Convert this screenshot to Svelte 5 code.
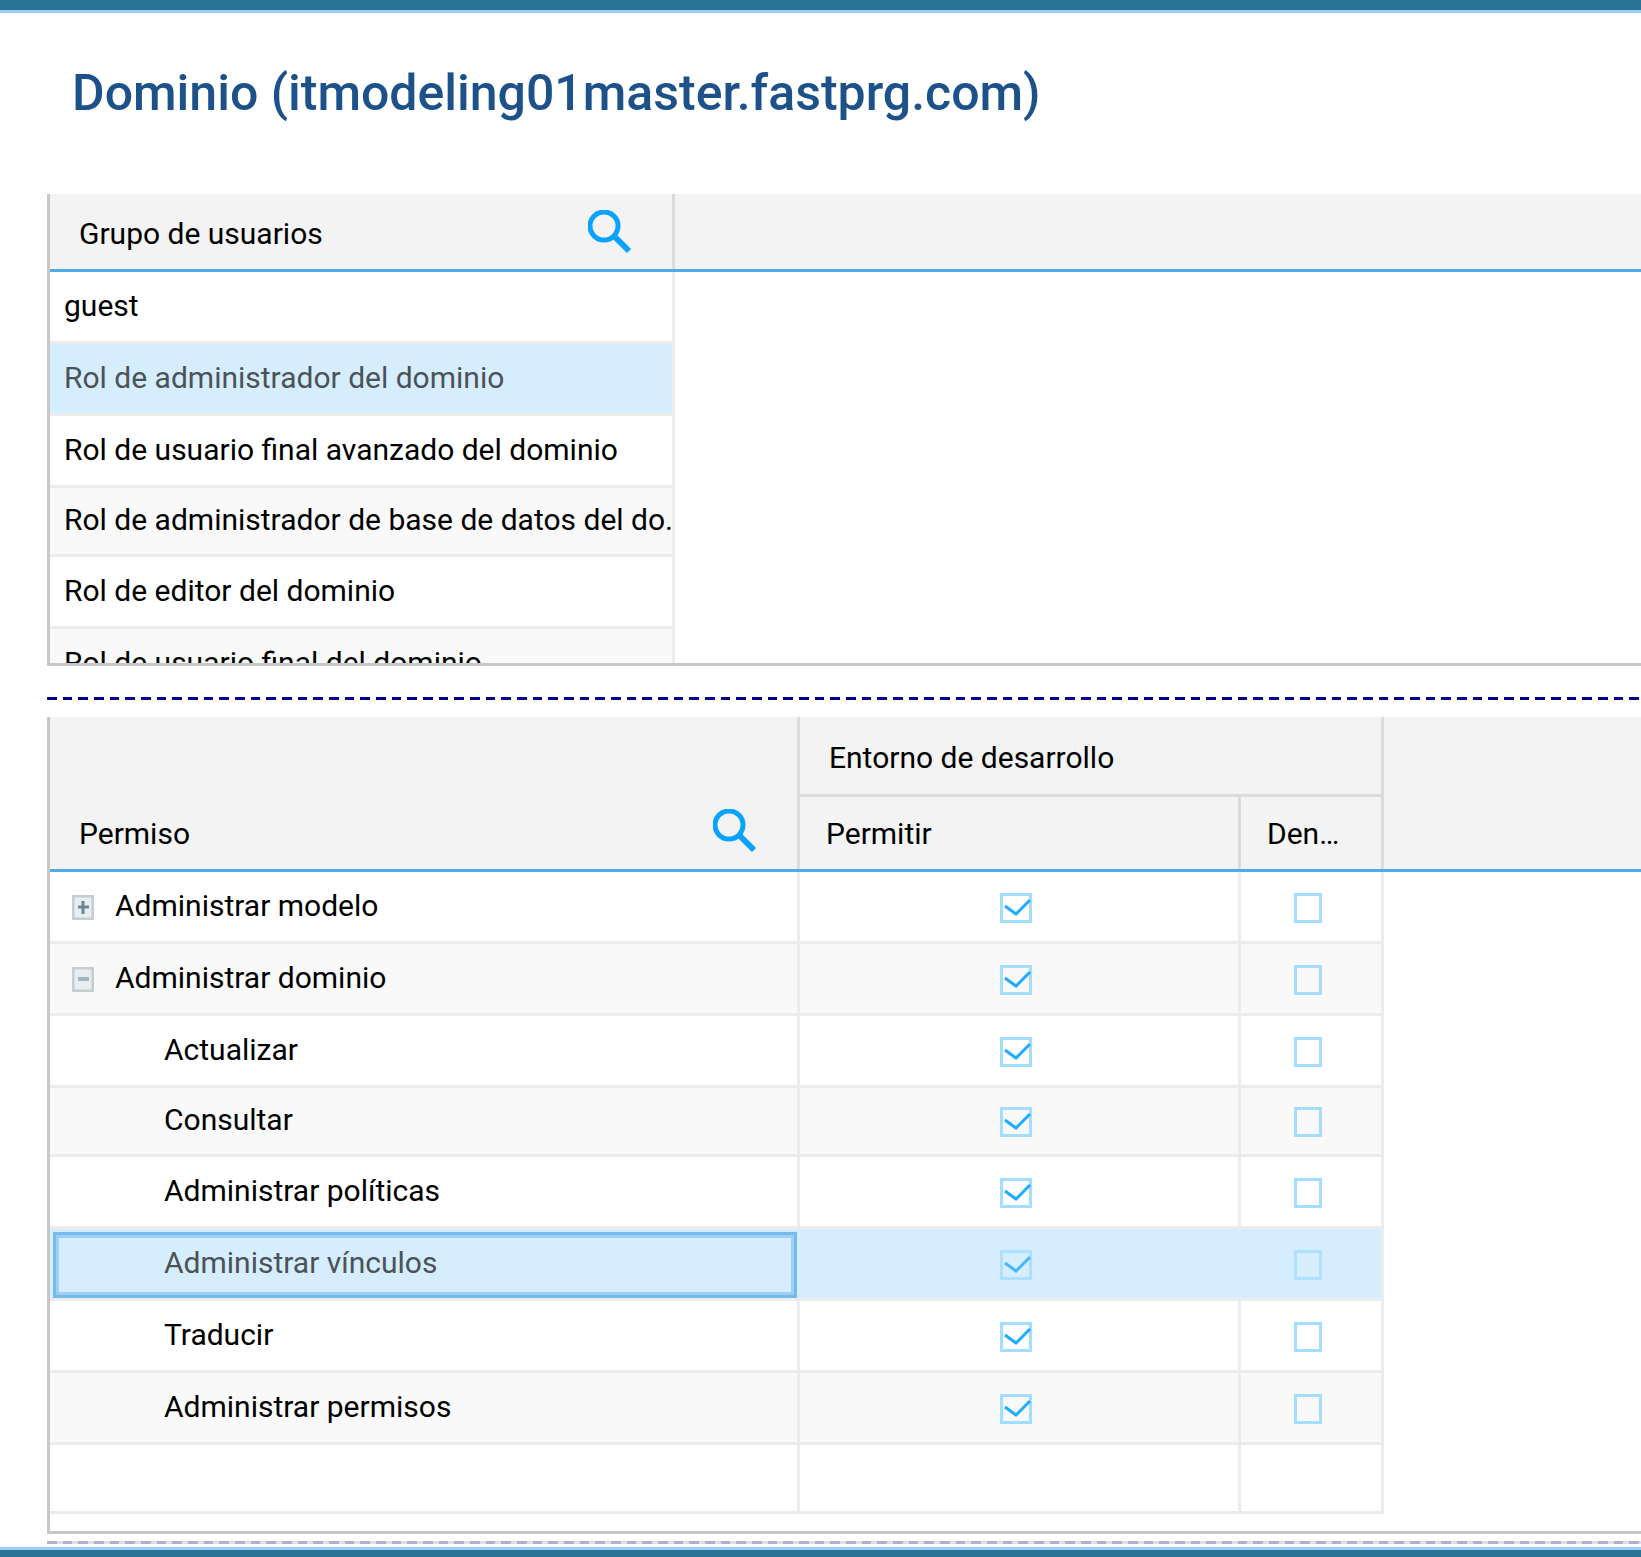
<script>
  const groups = [
    { name: 'guest' },
    { name: 'Rol de administrador del dominio', selected: true },
    { name: 'Rol de usuario final avanzado del dominio' },
    { name: 'Rol de administrador de base de datos del do.' },
    { name: 'Rol de editor del dominio' },
    { name: 'Rol de usuario final del dominio' }
  ];

  let permissions = $state([
    { name: 'Administrar modelo', node: 'closed', allow: true, deny: false },
    { name: 'Administrar dominio', node: 'open', allow: true, deny: false },
    { name: 'Actualizar', allow: true, deny: false },
    { name: 'Consultar', allow: true, deny: false },
    { name: 'Administrar políticas', allow: true, deny: false },
    { name: 'Administrar vínculos', selected: true, allow: true, deny: false },
    { name: 'Traducir', allow: true, deny: false },
    { name: 'Administrar permisos', allow: true, deny: false }
  ]);
</script>

{#snippet search(label)}
  <button type="button" aria-label={label}>
    <svg viewBox="0 0 44 44" width="44" height="44" aria-hidden="true">
      <circle cx="16" cy="16" r="14" fill="none" stroke="#0aa2ff" stroke-width="5" />
      <path d="M25 25L41 41" stroke="#0aa2ff" stroke-width="6" />
    </svg>
  </button>
{/snippet}

<div class="page">
  <div class="bar top"></div>

  <h1>Dominio (itmodeling01master.fastprg.com)</h1>

  <main>
    <section class="panel groups">
      <table>
        <colgroup><col class="c-group" /><col /></colgroup>
        <thead>
          <tr>
            <th scope="col">
              <div class="head">
                <span>Grupo de usuarios</span>
                {@render search('Buscar grupo de usuarios')}
              </div>
            </th>
            <td class="filler"></td>
          </tr>
        </thead>
        <tbody>
          {#each groups as group}
            <tr class:selected={group.selected}>
              <td class="cell group">{group.name}</td>
              <td></td>
            </tr>
          {/each}
        </tbody>
      </table>
    </section>

    <div class="dashes"></div>

    <section class="panel perms">
      <table>
        <colgroup><col class="c-perm" /><col class="c-allow" /><col class="c-deny" /><col /></colgroup>
        <thead>
          <tr>
            <th class="low" rowspan="2" scope="col">
              <div class="head">
                <span>Permiso</span>
                {@render search('Buscar permiso')}
              </div>
            </th>
            <th class="over" colspan="2" scope="colgroup">Entorno de desarrollo</th>
            <td class="filler" rowspan="2"></td>
          </tr>
          <tr>
            <th class="sub" scope="col">Permitir</th>
            <th class="sub" scope="col">Den…</th>
          </tr>
        </thead>
        <tbody>
          {#each permissions as item}
            <tr class:selected={item.selected}>
              <td class="cell perm" class:focus={item.selected}>
                <div class="name" class:child={!item.node}>
                  {#if item.node}
                    <button class="node" type="button" aria-label={item.node === 'open' ? 'Contraer' : 'Expandir'}>
                      <svg viewBox="0 0 22 25" width="22" height="25" aria-hidden="true">
                        <rect x="1" y="1" width="20" height="23" fill="#e8edf0" stroke="#c5cdd1" stroke-width="3" />
                        {#if item.node === 'closed'}
                          <path d="M6 12H17M11 6V19" stroke="#6d8792" stroke-width="3" />
                        {:else}
                          <path d="M6 12H17" stroke="#a3b5bf" stroke-width="4" />
                        {/if}
                      </svg>
                    </button>
                  {/if}
                  <span>{item.name}</span>
                </div>
              </td>
              <td class="cell tick">
                <label class="box">
                  <input type="checkbox" bind:checked={item.allow} aria-label="Permitir {item.name}" />
                  {#if item.allow}
                    <svg viewBox="0 0 32 30" width="32" height="30" aria-hidden="true">
                      <path d="M5 13L16 21L30 7" fill="none" stroke="#1fabff" stroke-width="3" />
                    </svg>
                  {/if}
                </label>
              </td>
              <td class="cell tick">
                <label class="box deny">
                  <input type="checkbox" bind:checked={item.deny} aria-label="Denegar {item.name}" />
                </label>
              </td>
              <td></td>
            </tr>
          {/each}
          <tr>
            <td class="cell"></td>
            <td class="cell"></td>
            <td class="cell"></td>
            <td></td>
          </tr>
        </tbody>
      </table>
    </section>

    <div class="dashes faint"></div>
  </main>

  <div class="bar bottom"></div>
</div>

<style>
  :global(body) {
    background: #fff;
  }

  .page {
    font-family: Roboto, 'Liberation Sans', sans-serif;
    font-size: 30px;
    line-height: 36px;
    color: #000;
    overflow: hidden;
  }

  .bar {
    height: 10px;
    background: #287497;
  }

  .top {
    border-bottom: 3px solid #9cf;
  }

  .bottom {
    height: 7px;
    border-top: 3px solid #9cf;
  }

  h1 {
    margin: 0;
    padding: 48px 72px 69px;
    font-size: 50px;
    line-height: 64px;
    font-weight: 500;
    color: #1d5189;
    white-space: nowrap;
  }

  main {
    padding-left: 47px;
  }

  .panel {
    border-left: 3px solid #c7c7c7;
    border-bottom: 3px solid #c7c7c7;
    overflow: hidden;
  }

  .groups {
    height: 469px;
  }

  .perms {
    padding-bottom: 17px;
  }

  table {
    width: 100%;
    table-layout: fixed;
    border-collapse: separate;
    border-spacing: 0;
  }

  .c-group { width: 625px; }
  .c-perm { width: 750px; }
  .c-allow { width: 441px; }
  .c-deny { width: 143px; }

  th,
  td {
    box-sizing: border-box;
    padding: 0;
    font-weight: 400;
    text-align: left;
    white-space: nowrap;
  }

  th,
  .filler {
    background: #f3f3f3;
    border-bottom: 3px solid #50aae6;
  }

  th {
    height: 78px;
    box-shadow: inset -3px 0 #dbdbdb;
  }

  .head {
    display: flex;
    align-items: center;
    justify-content: space-between;
    height: 44px;
    padding: 0 43px 0 29px;
  }

  .head span {
    padding-top: 5px;
  }

  .low {
    vertical-align: bottom;
    padding-bottom: 16px;
  }

  th.over {
    height: 80px;
    padding: 5px 0 0 29px;
    border-bottom-color: #dbdbdb;
  }

  th.sub {
    height: 75px;
    padding: 1px 0 0 26px;
  }

  button {
    display: block;
    padding: 0;
    border: 0;
    background: none;
    cursor: pointer;
  }

  svg {
    display: block;
  }

  .cell {
    height: 72px;
    border-right: 3px solid #ececec;
    border-bottom: 3px solid #ececec;
    overflow: hidden;
  }

  tbody tr:nth-child(5n + 4) .cell {
    height: 69px;
  }

  tbody tr:nth-child(even) .cell {
    background: #f9f9f9;
  }

  tbody tr.selected .cell {
    background: #d6edfd;
    color: #4b5358;
  }

  .perms .selected .cell:not(:nth-child(3)) {
    border-right-color: #d6edfd;
  }

  .selected .box {
    opacity: 0.8;
  }

  .group {
    padding: 0 0 2px 14px;
  }

  .perm {
    padding-bottom: 2px;
  }

  .name {
    box-sizing: border-box;
    display: flex;
    align-items: center;
    gap: 21px;
    padding-left: 22px;
  }

  .name.child {
    padding-left: 114px;
  }

  .node {
    padding-top: 4px;
  }

  .perm.focus {
    padding: 3px 0 0 3px;
  }

  .focus .name {
    height: 66px;
    padding: 0 0 4px 108px;
    border: 3px solid #72bbea;
    box-shadow: inset 0 0 0 3px #9dd0f4;
  }

  .tick {
    padding: 2px 6px 0 0;
  }

  .box {
    display: grid;
    width: 32px;
    margin: 0 auto;
  }

  .box > * {
    grid-area: 1 / 1;
  }

  .deny {
    width: 28px;
  }

  input {
    appearance: none;
    box-sizing: border-box;
    width: 100%;
    height: 30px;
    margin: 0;
    border: 3px solid #a3ddff;
  }

  .dashes {
    height: 3px;
    margin: 31px 2px 17px 0;
    background: repeating-linear-gradient(
      90deg,
      #00008b 0 10px,
      transparent 10px 16px,
      #00008b 16px 25px,
      transparent 25px 31px,
      #00008b 31px 41px,
      transparent 41px 47px
    );
  }

  .faint {
    margin: 7px 0 3px;
    background: repeating-linear-gradient(
      90deg,
      #b0b0cf 0 10px,
      #e0e0e4 10px 16px,
      #b0b0cf 16px 25px,
      #e0e0e4 25px 31px,
      #b0b0cf 31px 41px,
      #e0e0e4 41px 47px
    );
  }
</style>
